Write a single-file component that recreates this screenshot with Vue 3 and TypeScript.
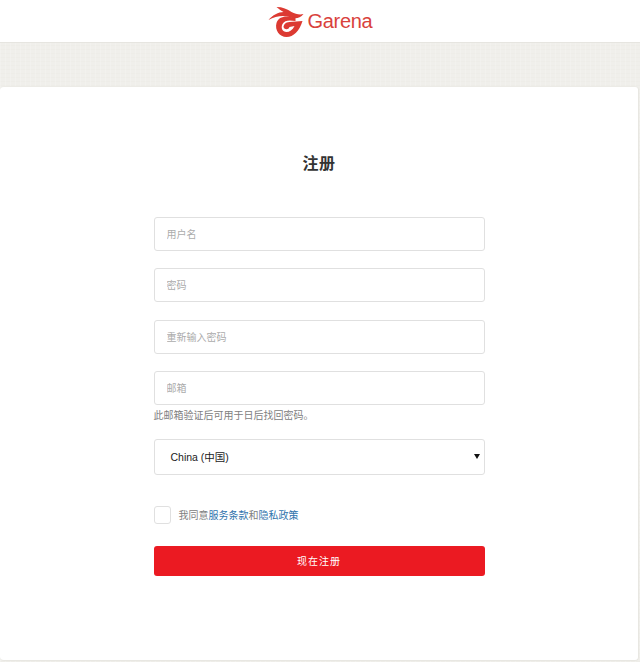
<script setup lang="ts">
const fields: string[] = ['用户名', '密码', '重新输入密码'];
</script>

<template>
  <div class="page">
    <header class="top">
      <svg class="mark" width="37" height="30" viewBox="0 0 36 30" aria-hidden="true">
        <path d="M0 13 C4 8 10 5 15 5 C12 3 10 2 8 0 C14 0 19 2 23 5 C27 7 31 8 35 7 C31 12 26 12 21 10 C15 8 7 9 0 13 Z" fill="#dc3a32"/>
        <path fill-rule="evenodd" d="M27 11 C18 8 10 9 8 16 C6 23 11 30 18 30 C25 30 31 24 34 14 L21 15 C17 15 15 18 15 20 C16 23 20 23 21 20 L26 19 C24 23 21 25 18 25 C14 25 12 21 14 17 C16 13 21 13 27 14 Z" fill="#dc3a32"/>
      </svg>
      <span class="brand">Garena</span>
    </header>
    <div class="band"></div>
    <main class="card">
      <h1 class="title">注册</h1>
      <form class="form" @submit.prevent>
        <input v-for="f in fields" :key="f" class="field stacked" type="text" :placeholder="f" />
        <input class="field" type="text" placeholder="邮箱" />
        <p class="hint">此邮箱验证后可用于日后找回密码。</p>
        <div class="select">
          <span>China (中国)</span>
          <span class="arrow"></span>
        </div>
        <label class="agree">
          <span class="check"></span>
          <span>我同意<a class="link">服务条款</a>和<a class="link">隐私政策</a></span>
        </label>
        <button class="submit" type="button">现在注册</button>
      </form>
    </main>
  </div>
</template>

<style>
html, body { margin: 0; background: #fff; }
</style>

<style scoped>
.page {
  width: 640px;
  height: 662px;
  overflow: hidden;
  background-color: #f0efeb;
  background-image:
    repeating-linear-gradient(90deg, rgba(255,255,255,.16) 0 1px, transparent 1px 5px),
    repeating-linear-gradient(0deg, rgba(225,224,216,.14) 0 1px, transparent 1px 4px);
  font-family: "Liberation Sans", "Noto Sans CJK SC", sans-serif;
  display: flex;
  flex-direction: column;
}
.top {
  height: 42px;
  flex: none;
  background: #fff;
  border-bottom: 1px solid #e6e5e0;
  display: flex;
  justify-content: center;
  align-items: center;
  gap: 3px;
}
.mark { margin-top: 1px; }
.brand {
  font-family: "Liberation Sans", sans-serif;
  font-size: 20px;
  color: #d9423c;
  letter-spacing: -0.3px;
  margin-top: 1px;
}
.band { height: 43px; flex: none; }
.card {
  flex: 1;
  background: #fff;
  border-radius: 4px;
  border: 1px solid #e8e7e2;
  border-top-color: #ecebe6;
  margin-right: 1px;
  margin-bottom: 1px;
  border-left: 0;
  display: flex;
  flex-direction: column;
  align-items: center;
}
.title {
  margin: 65px 0 41px;
  font-size: 16px;
  line-height: 24px;
  font-weight: 700;
  color: #333;
  letter-spacing: 0.4px;
}
.form {
  width: 331px;
  display: flex;
  flex-direction: column;
}
.field {
  box-sizing: border-box;
  width: 100%;
  height: 34px;
  padding: 1px 12px 0;
  border: 1px solid #e0e0e0;
  border-radius: 3px;
  background: #fff;
  font: 10px "Liberation Sans", "Noto Sans CJK SC", sans-serif;
  color: #333;
  outline: none;
}
.field::placeholder { color: #ababab; opacity: 1; }
.stacked { margin-bottom: 17.3px; }
.hint {
  margin: 4px 0 16px;
  font-size: 10px;
  line-height: 14px;
  color: #808080;
}
.select {
  box-sizing: border-box;
  height: 36px;
  border: 1px solid #e0e0e0;
  border-radius: 3px;
  padding: 0 4px 0 16px;
  display: flex;
  align-items: center;
  justify-content: space-between;
  font-size: 10.5px;
  color: #222;
}
.arrow {
  width: 0;
  height: 0;
  border-left: 3px solid transparent;
  border-right: 3px solid transparent;
  border-top: 5px solid #111;
}
.agree {
  margin-top: 31px;
  display: flex;
  align-items: center;
  gap: 8px;
  height: 18px;
  font-size: 10px;
  color: #808080;
}
.check {
  box-sizing: border-box;
  width: 17px;
  height: 18px;
  border: 1px solid #e0e0e0;
  border-radius: 3px;
  background: #fff;
}
.link { color: #2f74ad; }
.submit {
  margin-top: 22px;
  height: 30px;
  border: 0;
  border-radius: 3px;
  background: #eb1a22;
  color: #fff;
  font: 10px "Liberation Sans", "Noto Sans CJK SC", sans-serif;
  letter-spacing: 1px;
}
</style>
